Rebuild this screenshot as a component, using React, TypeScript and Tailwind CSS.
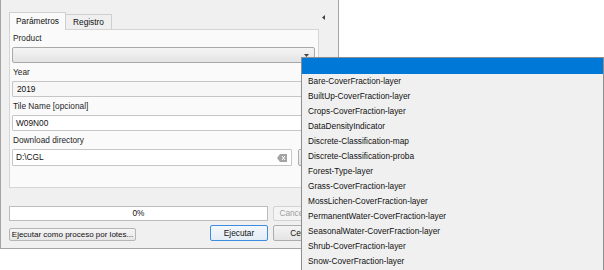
import React from "react";

const layers = [
  "Bare-CoverFraction-layer",
  "BuiltUp-CoverFraction-layer",
  "Crops-CoverFraction-layer",
  "DataDensityIndicator",
  "Discrete-Classification-map",
  "Discrete-Classification-proba",
  "Forest-Type-layer",
  "Grass-CoverFraction-layer",
  "MossLichen-CoverFraction-layer",
  "PermanentWater-CoverFraction-layer",
  "SeasonalWater-CoverFraction-layer",
  "Shrub-CoverFraction-layer",
  "Snow-CoverFraction-layer",
];

function Label({ text }: { text: string }) {
  return <div className="flex h-[12px] items-center pl-[1px] text-[#1e1e1e]">{text}</div>;
}

export default function App() {
  return (
    <div className="relative h-[270px] w-[604px] overflow-hidden bg-white font-['Liberation_Sans',Arial,sans-serif] text-[8.3px] leading-none text-[#111]">
      {/* dialog */}
      <div className="flex h-[249px] w-[339px] flex-col border-x border-b border-[#a5a5a5] bg-[#f0f0f0]">
        <div className="flex pl-[8px] pr-[13px] pt-[12px]">
          <div className="flex h-[17px] items-end">
            <div className="relative z-10 -mb-px flex h-[18px] w-[57px] items-center justify-center border border-b-0 border-[#cfcfcf] bg-[#fafafa]">
              Parámetros
            </div>
            <div className="flex h-[15px] w-[46px] items-center justify-center border border-b-0 border-l-0 border-[#cfcfcf] bg-[#efefef]">
              Registro
            </div>
          </div>
          <svg className="ml-auto mt-[3px]" width="3" height="5" viewBox="0 0 3 5">
            <path d="M3 0 L0 2.5 L3 5 Z" fill="#444" />
          </svg>
        </div>

        <div className="ml-[8px] h-[159px] w-[310px] border border-[#d5d5d5] bg-[#fafafa] pl-[2px] pr-[3px] pt-[2px]">
          <Label text="Product" />
          <div className="mt-[3px] flex h-[16px] items-center justify-end rounded-[2px] border border-[#a8a8a8] bg-gradient-to-b from-[#f4f4f4] to-[#e4e4e4] pr-[5px]">
            <svg width="5" height="3" viewBox="0 0 5 3">
              <path d="M0 0 H5 L2.5 3 Z" fill="#444" />
            </svg>
          </div>

          <div className="mt-[3px]">
            <Label text="Year" />
          </div>
          <div className="mt-[3px] flex h-[16px] items-center rounded-[1px] border border-[#c6c6c6] bg-[#f7f7f7] pl-[4px]">
            2019
          </div>

          <div className="mt-[3px]">
            <Label text="Tile Name [opcional]" />
          </div>
          <div className="mt-[3px] flex h-[16px] items-center rounded-[1px] border border-[#c6c6c6] bg-white pl-[3px]">
            W09N00
          </div>

          <div className="mt-[3px]">
            <Label text="Download directory" />
          </div>
          <div className="mt-[3px] flex gap-[6px]">
            <div className="flex h-[17px] w-[281px] items-center justify-between rounded-[1px] border border-[#c6c6c6] bg-white pl-[3px] pr-[4px]">
              <span>D:\CGL</span>
              <svg width="10" height="8" viewBox="0 0 10 8">
                <path d="M3 0 H10 V8 H3 L0 4 Z" fill="#a3a3a3" />
                <path d="M5 2 L8 6 M8 2 L5 6" stroke="#fff" strokeWidth="1" />
              </svg>
            </div>
            <div className="h-[17px] w-[17px] rounded-[2px] border border-[#adadad] bg-gradient-to-b from-[#f4f4f4] to-[#e2e2e2]" />
          </div>
        </div>

        <div className="mt-[18px] flex gap-[5px] pl-[8px]">
          <div className="flex h-[15px] w-[259px] items-center justify-center border border-[#bcbcbc] bg-white">0%</div>
          <div className="flex h-[15px] w-[46px] items-center justify-center whitespace-nowrap rounded-[2px] border border-[#d3d3d3] bg-[#f4f4f4] text-[#a0a0a0]">
            Cancelar
          </div>
        </div>

        <div className="mt-[4px] flex items-end pl-[8px]">
          <div className="flex h-[13px] w-[127px] items-center justify-center whitespace-nowrap rounded-[2px] border border-[#b5b5b5] bg-gradient-to-b from-[#f6f6f6] to-[#e6e6e6] text-[8px]">
            Ejecutar como proceso por lotes...
          </div>
          <div className="ml-[74px] flex h-[16px] w-[58px] items-center justify-center rounded-[2px] border border-[#3d8ee0] bg-gradient-to-b from-[#f4f8fc] to-[#e4ecf5]">
            Ejecutar
          </div>
          <div className="ml-[5px] flex h-[16px] w-[58px] items-center justify-center rounded-[2px] border border-[#adadad] bg-gradient-to-b from-[#f4f4f4] to-[#e4e4e4]">
            Cerrar
          </div>
        </div>
      </div>

      {/* open dropdown list */}
      <div className="absolute left-[301px] top-[57px] h-[230px] w-[303px] border border-[#8e8e8e] bg-[#f0f0f0] shadow-[1px_1px_2px_rgba(0,0,0,0.15)]">
        <div className="h-[16px] bg-[#0078d7]" />
        {layers.map((name) => (
          <div key={name} className="flex h-[15px] items-center pl-[6px] text-[#111]">
            {name}
          </div>
        ))}
      </div>
    </div>
  );
}
